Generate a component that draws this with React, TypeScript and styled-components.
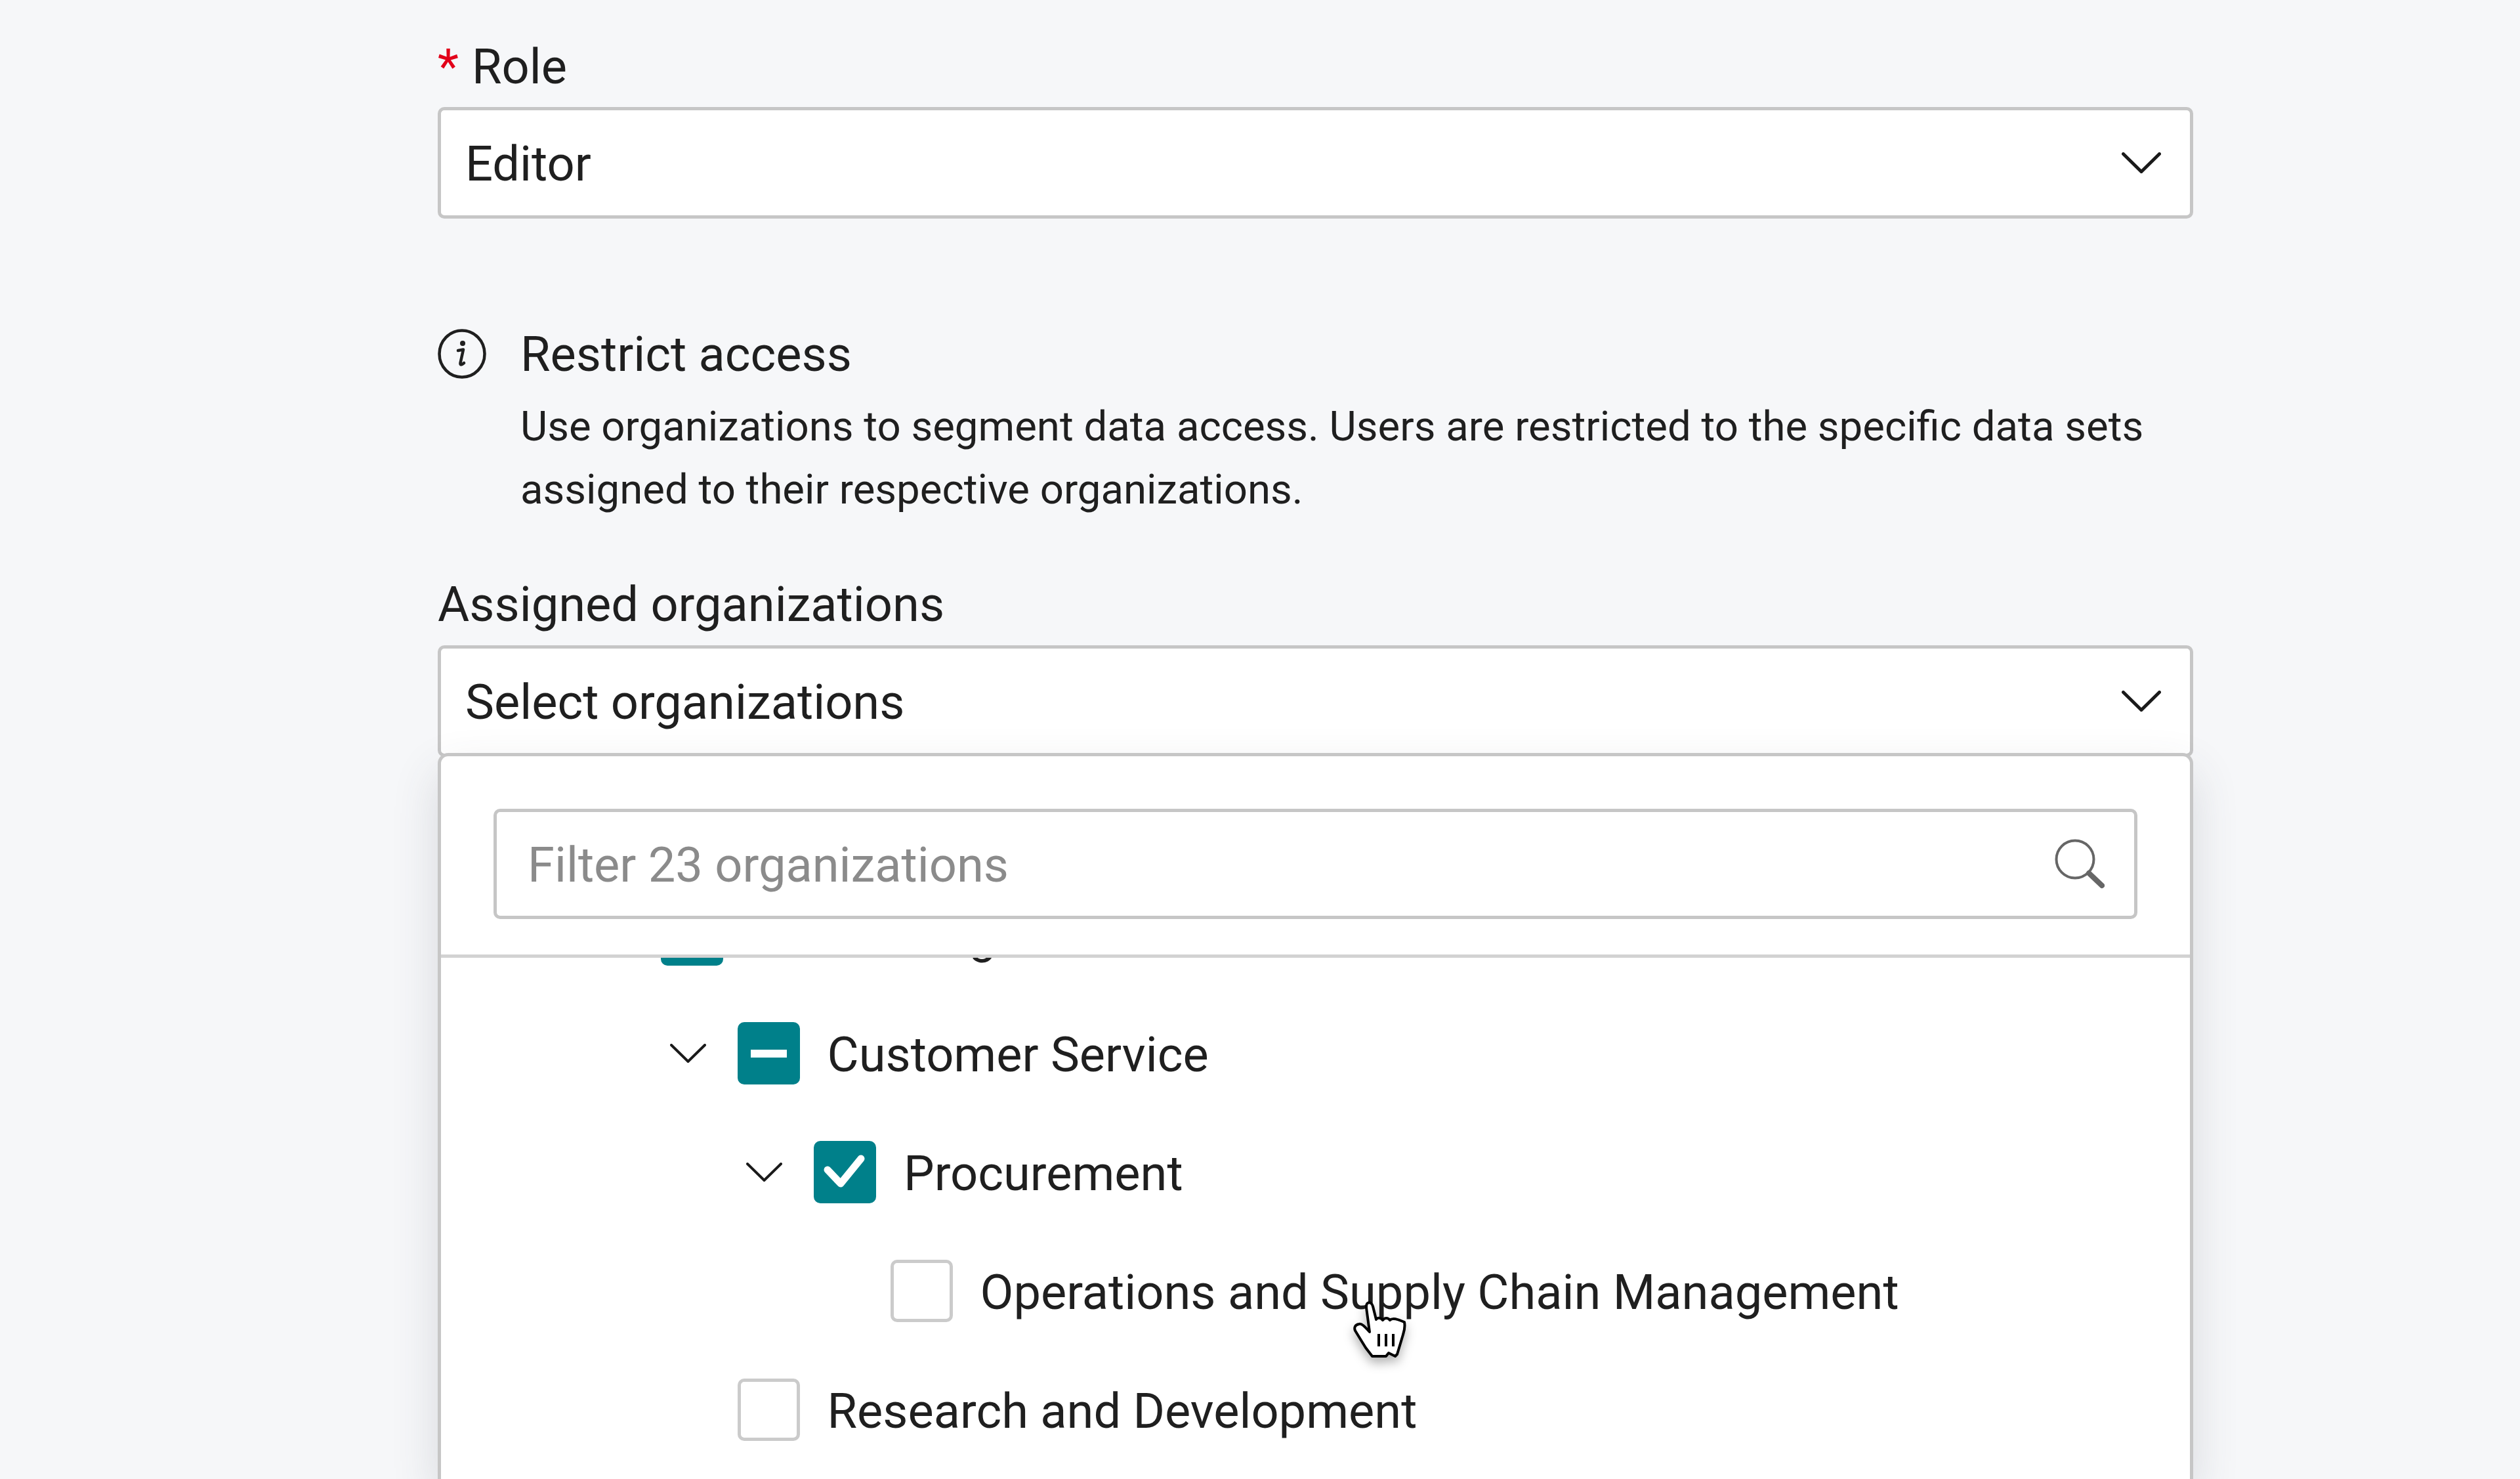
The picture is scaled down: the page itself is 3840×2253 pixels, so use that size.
import React from 'react'
import styled, { createGlobalStyle } from 'styled-components'

const GlobalStyle = createGlobalStyle`
  html, body {
    margin: 0;
    height: 100%;
    background: #f6f7f9;
  }

  body {
    font-family: Roboto, "Liberation Sans", sans-serif;
    color: #1f1f1f;
  }
`

const Page = styled.div`
  position: relative;
  box-sizing: border-box;
  width: 3840px;
  height: 2253px;
  overflow: hidden;
  padding: 54px 498px 0 667px;
  display: flex;
  flex-direction: column;
  background: #f6f7f9;
`

const FieldLabel = styled.div<{ $gap: number }>`
  font-size: 74px;
  line-height: 96px;
  margin-bottom: ${({ $gap }) => $gap}px;
`

const Asterisk = styled.span`
  color: #e2001a;
  margin-right: 20px;
`

const SelectBox = styled.div`
  box-sizing: border-box;
  flex: none;
  height: 170px;
  display: flex;
  align-items: center;
  justify-content: space-between;
  padding: 0 44px 0 37px;
  background: #fff;
  border: 5px solid #c6c6c6;
  border-radius: 10px;
  font-size: 74px;
`

const NudgedText = styled.span`
  padding-top: 3px;
`

const InfoRow = styled.div`
  display: flex;
  gap: 52px;
  margin-top: 159px;
`

const InfoBody = styled.div`
  flex: 1;
`

const InfoTitle = styled.div`
  font-size: 74px;
  line-height: 96px;
  margin-bottom: 14px;
`

const InfoText = styled.div`
  font-size: 63.5px;
  line-height: 95.5px;
`

const AssignedBlock = styled.div`
  margin-top: 80px;
  display: flex;
  flex-direction: column;
  flex: 1;
  min-height: 0;
`

const Panel = styled.div`
  flex: 1;
  min-height: 0;
  margin-top: -6px;
  background: #fff;
  border: 5px solid #c6c6c6;
  border-bottom: none;
  border-radius: 16px 16px 0 0;
  box-shadow: 0 30px 70px rgba(60, 70, 80, 0.16);
  display: flex;
  flex-direction: column;
  overflow: hidden;
`

const FilterSection = styled.div`
  flex: none;
  padding: 80px 80px 54px;
  border-bottom: 5px solid #d2d2d2;
`

const FilterBox = styled.div`
  box-sizing: border-box;
  height: 168px;
  display: flex;
  align-items: center;
  justify-content: space-between;
  padding: 0 45px 0 47px;
  border: 5px solid #c6c6c6;
  border-radius: 10px;
  font-size: 74px;
  color: #8b8b8b;
`

const Tree = styled.div`
  flex: 1;
  min-height: 0;
  overflow: hidden;
`

const TreeList = styled.div`
  margin-top: -126px;
`

const TreeRow = styled.div<{ $level: number }>`
  height: 181px;
  display: flex;
  align-items: center;
  padding-left: ${({ $level }) => 232 + $level * 116.5}px;
  font-size: 74px;
`

const ChevronSlot = styled.div`
  flex: none;
  width: 103px;
  display: flex;
  align-items: center;
`

const Check = styled.div<{ $on: boolean }>`
  box-sizing: border-box;
  flex: none;
  width: 95px;
  height: 95px;
  margin-right: 42px;
  display: flex;
  align-items: center;
  justify-content: center;
  border-radius: 10px;
  background: ${({ $on }) => ($on ? '#00808a' : '#fff')};
  border: ${({ $on }) => ($on ? 'none' : '5px solid #cbcbcb')};
`

const Cursor = styled.svg`
  position: absolute;
  left: 2063px;
  top: 1983px;
  width: 80px;
  height: 86px;
  overflow: visible;
  filter: drop-shadow(0 8px 8px rgba(0, 0, 0, 0.3));
`

const Chevron = ({ width, height, stroke }: { width: number; height: number; stroke: number }): JSX.Element => (
  <svg width={width} height={height} viewBox={`0 0 ${width} ${height}`} fill='none'>
    <path
      d={`M${stroke / 2} ${stroke / 2}L${width / 2} ${height - stroke / 2}L${width - stroke / 2} ${stroke / 2}`}
      stroke='#1a1a1a'
      strokeWidth={stroke}
      strokeLinecap='round'
      strokeLinejoin='miter'
    />
  </svg>
)

type Org = {
  name: string
  level: number
  state: 'none' | 'some' | 'all'
  open?: boolean
}

const orgs: Array<Org> = [
  { name: 'Accounting', level: 0, state: 'some', open: true },
  { name: 'Customer Service', level: 1, state: 'some', open: true },
  { name: 'Procurement', level: 2, state: 'all', open: true },
  { name: 'Operations and Supply Chain Management', level: 3, state: 'none' },
  { name: 'Research and Development', level: 1, state: 'none' }
]

export default function App (): JSX.Element {
  return (
    <Page>
      <GlobalStyle />
      <FieldLabel $gap={13}><Asterisk>*</Asterisk>Role</FieldLabel>
      <SelectBox>
        <NudgedText>Editor</NudgedText>
        <Chevron width={60} height={32} stroke={5} />
      </SelectBox>

      <InfoRow>
        <svg width={74} height={76} viewBox='0 0 74 76' fill='none' style={{ flex: 'none', marginTop: 9 }}>
          <ellipse cx={37} cy={38} rx={34.5} ry={35.5} stroke='#1f1f1f' strokeWidth={4.5} />
          <circle cx={38} cy={22} r={4} fill='#1f1f1f' />
          <path d='M31 33L39 31.5L34.5 52Q34 57 40 52' stroke='#1f1f1f' strokeWidth={4.5} strokeLinecap='round' strokeLinejoin='round' />
        </svg>
        <InfoBody>
          <InfoTitle>Restrict access</InfoTitle>
          <InfoText>
            Use organizations to segment data access. Users are restricted to the specific data sets
            <br />
            assigned to their respective organizations.
          </InfoText>
        </InfoBody>
      </InfoRow>

      <AssignedBlock>
        <FieldLabel $gap={14}>Assigned organizations</FieldLabel>
        <SelectBox>
          <NudgedText>Select organizations</NudgedText>
          <Chevron width={60} height={32} stroke={5} />
        </SelectBox>
        <Panel>
          <FilterSection>
            <FilterBox>
              <NudgedText>Filter 23 organizations</NudgedText>
              <svg width={76} height={76} viewBox='0 0 76 76' fill='none'>
                <circle cx={31} cy={31} r={28.5} stroke='#666' strokeWidth={4} />
                <path d='M52 52L72 71' stroke='#666' strokeWidth={8} strokeLinecap='round' />
              </svg>
            </FilterBox>
          </FilterSection>
          <Tree>
            <TreeList>
              {orgs.map(({ name, level, state, open }) => (
                <TreeRow key={name} $level={level}>
                  <ChevronSlot>
                    {open && <Chevron width={55} height={29} stroke={4} />}
                  </ChevronSlot>
                  <Check $on={state !== 'none'}>
                    {state === 'some' && (
                      <svg width={55} height={12} viewBox='0 0 55 12'>
                        <rect width={55} height={12} fill='#fff' />
                      </svg>
                    )}
                    {state === 'all' && (
                      <svg width={95} height={95} viewBox='0 0 95 95' fill='none'>
                        <path d='M21 44L41 65L72 27' stroke='#fff' strokeWidth={11} strokeLinecap='round' strokeLinejoin='round' />
                      </svg>
                    )}
                  </Check>
                  <NudgedText>{name}</NudgedText>
                </TreeRow>
              ))}
            </TreeList>
          </Tree>
        </Panel>
      </AssignedBlock>

      <Cursor viewBox='0 0 80 86' fill='none'>
        <path
          d='M21 2C25 0 28 3 29 7L34 27C36 24 41 24 44 28C47 24 52 24 55 28C59 24 66 26 77 31C78 36 77 44 75 50L66 80L63 83L53 78L49 83H28L18 70L2 44C0 39 2 35 8 34C12 33 16 37 24 46L19 9C19 6 19 3 21 2Z'
          fill='#fff'
          stroke='#000'
          strokeWidth={4}
          strokeLinejoin='round'
        />
        <path d='M38 49V68M49 49V68M60 49V68' stroke='#000' strokeWidth={4} />
      </Cursor>
    </Page>
  )
}
